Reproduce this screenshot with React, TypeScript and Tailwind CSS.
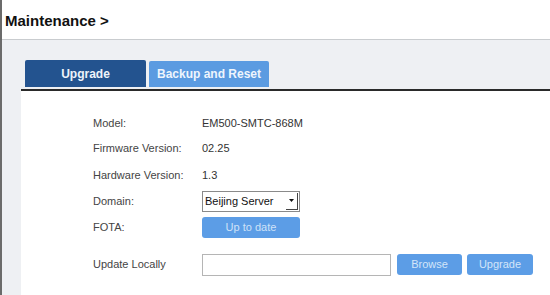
export default function App() {
  const rows: { label: string; value?: string; top: string }[] = [
    { label: "Model:", value: "EM500-SMTC-868M", top: "mt-0" },
    { label: "Firmware Version:", value: "02.25", top: "mt-[1px]" },
    { label: "Hardware Version:", value: "1.3", top: "mt-[3px]" },
  ];

  return (
    <div className="flex h-[295px] w-[550px] overflow-hidden bg-white font-['Liberation_Sans',Arial,sans-serif] text-[#333]">
      <div className="w-[2px] shrink-0 bg-[#6b6b6b]" />
      <div className="flex min-w-0 flex-1 flex-col">
        <div className="flex h-10 shrink-0 items-center border-b border-[#c9cccf] pl-[3px] pt-[3px]">
          <h1 className="text-[15px] font-bold text-[#111]">Maintenance &gt;</h1>
        </div>
        <div className="flex flex-1 flex-col bg-[#eef0f3] pl-[19px]">
          <div className="mt-5 flex items-end gap-[3px] pl-1">
            <div className="flex h-[27px] w-[121px] items-center justify-center rounded-t-[2px] bg-[#23538f] text-[12px] font-bold text-[#eef3fa]">
              Upgrade
            </div>
            <div className="flex h-[26px] w-[120px] items-center justify-center rounded-t-[2px] bg-[#5b9be1] text-[12px] font-bold text-[#eef5fd]">
              Backup and Reset
            </div>
          </div>
          <div className="mt-[2px] flex-1 border-t-2 border-[#2a2a2a] bg-white pl-[72px] pt-5 text-[11px]">
            {rows.map((r) => (
              <div key={r.label} className={`flex h-6 items-center ${r.top}`}>
                <span className="w-[109px] text-[#444]">{r.label}</span>
                <span className="text-[#333]">{r.value}</span>
              </div>
            ))}
            <div className="mt-[1px] flex h-[26px] items-center">
              <span className="w-[109px] text-[#444]">Domain:</span>
              <div className="flex h-[21px] w-[98px] items-center justify-between border border-[#8a8a8a] bg-white pl-[2px] pr-[1px]">
                <span className="text-[11px] text-[#111]">Beijing Server</span>
                <div className="flex h-[17px] w-[12px] items-center justify-center border-b border-r border-[#444]">
                  <svg width="5" height="3" viewBox="0 0 5 3">
                    <path d="M0 0h5L2.5 3z" fill="#111" />
                  </svg>
                </div>
              </div>
            </div>
            <div className="flex h-[26px] items-center">
              <span className="w-[109px] text-[#444]">FOTA:</span>
              <button className="flex h-[21px] w-[98px] items-center justify-center rounded-[3px] bg-[#5c9de6] text-[11px] text-[#cfe2f8]">
                Up to date
              </button>
            </div>
            <div className="mt-[13px] flex h-[23px] items-center">
              <span className="w-[109px] text-[#444]">Update Locally</span>
              <div className="h-[22px] w-[189px] border border-[#b5b5b5] bg-white" />
              <button className="ml-[6px] flex h-[21px] w-[65px] items-center justify-center rounded-[3px] bg-[#5c9de6] text-[11px] text-[#d3e5f9]">
                Browse
              </button>
              <button className="ml-[5px] flex h-[21px] w-[66px] items-center justify-center rounded-[3px] bg-[#5c9de6] text-[11px] text-[#d3e5f9]">
                Upgrade
              </button>
            </div>
          </div>
        </div>
      </div>
    </div>
  );
}
